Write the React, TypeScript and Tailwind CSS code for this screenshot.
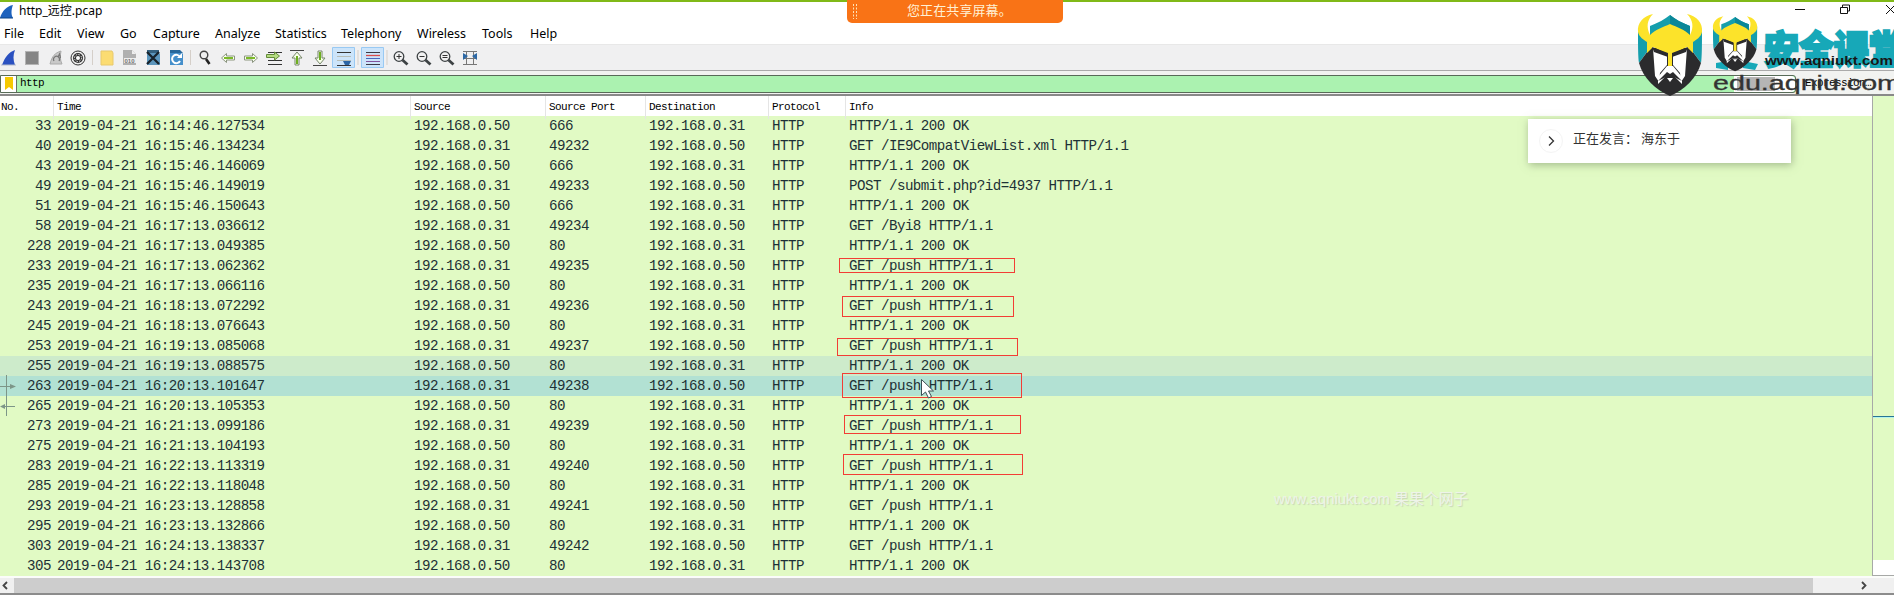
import React from "react";

const rows: [string, string, string, string, string][] = [
  ["33", "16:14:46.127534", "r", "666", "HTTP/1.1 200 OK"],
  ["40", "16:15:46.134234", "s", "49232", "GET /IE9CompatViewList.xml HTTP/1.1"],
  ["43", "16:15:46.146069", "r", "666", "HTTP/1.1 200 OK"],
  ["49", "16:15:46.149019", "s", "49233", "POST /submit.php?id=4937 HTTP/1.1"],
  ["51", "16:15:46.150643", "r", "666", "HTTP/1.1 200 OK"],
  ["58", "16:17:13.036612", "s", "49234", "GET /Byi8 HTTP/1.1"],
  ["228", "16:17:13.049385", "r", "80", "HTTP/1.1 200 OK"],
  ["233", "16:17:13.062362", "s", "49235", "GET /push HTTP/1.1"],
  ["235", "16:17:13.066116", "r", "80", "HTTP/1.1 200 OK"],
  ["243", "16:18:13.072292", "s", "49236", "GET /push HTTP/1.1"],
  ["245", "16:18:13.076643", "r", "80", "HTTP/1.1 200 OK"],
  ["253", "16:19:13.085068", "s", "49237", "GET /push HTTP/1.1"],
  ["255", "16:19:13.088575", "r", "80", "HTTP/1.1 200 OK"],
  ["263", "16:20:13.101647", "s", "49238", "GET /push HTTP/1.1"],
  ["265", "16:20:13.105353", "r", "80", "HTTP/1.1 200 OK"],
  ["273", "16:21:13.099186", "s", "49239", "GET /push HTTP/1.1"],
  ["275", "16:21:13.104193", "r", "80", "HTTP/1.1 200 OK"],
  ["283", "16:22:13.113319", "s", "49240", "GET /push HTTP/1.1"],
  ["285", "16:22:13.118048", "r", "80", "HTTP/1.1 200 OK"],
  ["293", "16:23:13.128858", "s", "49241", "GET /push HTTP/1.1"],
  ["295", "16:23:13.132866", "r", "80", "HTTP/1.1 200 OK"],
  ["303", "16:24:13.138337", "s", "49242", "GET /push HTTP/1.1"],
  ["305", "16:24:13.143708", "r", "80", "HTTP/1.1 200 OK"],
];

const rowColors: Record<string, string> = {
  "255": "bg-[#cdebcb]",
  "263": "bg-[#b2e1d3]",
};

const grid = "grid grid-cols-[54px_357px_135px_100px_123px_77px_1fr]";

const menus: [string, string][] = [
  ["File", "w-[35px]"],
  ["Edit", "w-[38px]"],
  ["View", "w-[43px]"],
  ["Go", "w-[33px]"],
  ["Capture", "w-[62px]"],
  ["Analyze", "w-[60px]"],
  ["Statistics", "w-[66px]"],
  ["Telephony", "w-[76px]"],
  ["Wireless", "w-[65px]"],
  ["Tools", "w-[48px]"],
  ["Help", "w-[40px]"],
];

function Toolbar() {
  return (
    <svg width="500" height="24" viewBox="0 46 500 24" fill="none" className="block shrink-0">
      <path d="M2 65C5 57 9 52 15 50C13 55 13 60 15 65Z" fill="#2a50c0" />
      <path d="M1 65H16" stroke="#b5bccb" />
      <rect x="25.500" y="51.500" width="13" height="13" fill="#858585" stroke="#b4b4b4" />
      <path d="M50 64C52 56 55 53 61 51C60 56 60 60 62 64Z" fill="#c9c9c9" stroke="#aaa" />
      <path d="M54 61a3 3 0 1 1 5 0M58 57l1.500-3 1 4" stroke="#777" strokeWidth="1.200" />
      <circle cx="78" cy="58" r="7" fill="#eee" stroke="#333" />
      <circle cx="78" cy="58" r="5" fill="#333" />
      <circle cx="78" cy="58" r="3.500" stroke="#eee" strokeDasharray="1.500 1.250" />
      <circle cx="78" cy="58" r="2" fill="#fff" />
      <path d="M92.500 50v15M190.500 50v15M358 50v15M387 50v15" stroke="#d5cfc9" />
      <path d="M101 51h11l1 2v12h-12z" fill="#fbdc72" stroke="#e8c96c" />
      <path d="M123 50h9l4 4v11h-13z" fill="#b0b0b0" />
      <path d="M132 50v4h4" fill="#eee" />
      <rect x="124" y="58" width="12" height="5" fill="#ededed" />
      <text x="124.500" y="63" fontSize="6" fontWeight="700" fontFamily="Liberation Sans" fill="#777">010</text>
      <path d="M147 50h9l4 4v11h-13z" fill="#5c96bd" />
      <path d="M147 50h12v3h-12z" fill="#35617f" />
      <path d="M147 52l12 12M159 52l-12 12" stroke="#17232c" strokeWidth="2.300" />
      <path d="M170 50h9l4 4v11h-13z" fill="#458fcb" />
      <path d="M170 50h10l3 3h-13z" fill="#27679b" />
      <path d="M180 57a4.200 4.200 0 1 0 0 4" stroke="#fff" strokeWidth="2" />
      <path d="M177 58h5v-5z" fill="#fff" />
      <circle cx="204" cy="55" r="3.800" fill="#eee" stroke="#444" strokeWidth="1.400" />
      <path d="M206 59l3.500 5" stroke="#222" strokeWidth="2.600" />
      <g fill="#f9fff0" stroke="#8b957f">
        <path d="M221.500 58l5-4.500v2.500h8v4h-8v2.500z" />
        <path d="M257.500 58l-5-4.500v2.500h-8v4h8v2.500z" />
      </g>
      <path d="M224 58h9M246 58h9" stroke="#7bb929" strokeWidth="2" />
      <path d="M268 52.500h14M268 60.500h14M268 64.500h14" stroke="#333" />
      <path d="M266.500 54.500h8V52l5 4-5 4v-2.500h-8z" fill="#b5dc80" stroke="#638a39" />
      <path d="M290 50.500h14M313 65.500h14" stroke="#444" />
      <path d="M297 52l-5 6h3v7h4v-7h3zM320 64l-5-6h3v-7h4v7h3z" fill="#f7ffe9" stroke="#77866b" />
      <path d="M297 56v8M320 52v8" stroke="#6eae20" strokeWidth="2" />
      <path d="M332.500 47.500h22v20h-22zM361.500 47.500h22v20h-22z" fill="#cce4fa" stroke="#98c9f3" />
      <path d="M337 52.500h14M337 65.500h14" stroke="#333" />
      <path d="M337 56.500h14M337 60.500h14" stroke="#b7bdb7" />
      <path d="M343 61h8l-2 4h-4z" fill="#2c65a5" />
      <path d="M366 52.500h14M366 64.500h14" stroke="#3b3b45" />
      <path d="M366 55.500h14" stroke="#d94c4c" strokeWidth="1.300" />
      <path d="M366 58.500h14" stroke="#4b67bc" />
      <path d="M366 61.500h14" stroke="#81529c" />
      {[399, 422, 445].map((x) => (
        <g key={x} stroke="#3d4244">
          <circle cx={x} cy="56.500" r="4.800" fill="#f2f2f2" strokeWidth="1.300" />
          <path d={`M${x + 3.5} 60l5 4.500`} strokeWidth="2.800" />
        </g>
      ))}
      <path d="M396.500 56.500h5M399 54v5M419.500 56.500h5M442.500 55.500h5M442.500 57.500h5" stroke="#333" />
      <path d="M463 51.500h14M463 64.500h14M466.500 52v12M473.500 52v12M463 58.500h14" stroke="#777" />
      <path d="M463 53l5 3-5 4zM477 53l-5 3 5 4z" fill="#2d68a5" />
    </svg>
  );
}

function Viking() {
  return (
    <>
      <path d="M12 11C20 8 27 4 32 0C37 4 44 8 52 11V24H12Z" fill="#159eac" />
      <path d="M32 0C37 4 44 8 52 11V24H32Z" fill="#0b8798" />
      <path d="M0 14L11 24V34L1 48C0 43 0 28 0 14ZM64 14L53 24V34L63 48C64 43 64 28 64 14Z" fill="#159eac" />
      <path d="M12 33H52L63 48C59 63 46 75 32 81C18 75 5 63 1 48Z" fill="#2b2b2d" />
      <path d="M15 -1C5 1 -1 8 0 17C1 22 6 25 9 27V38L15 32L32 40L49 32L55 38V27C58 25 63 22 64 17C65 8 59 1 49 -1C55 5 56 12 52 20C47 15 39 12 32 9C25 12 17 15 12 20C8 12 9 5 15 -1Z" fill="#fce32a" />
      <path d="M15 33L29 40V50L22 58L21 67L17 61ZM49 33L35 40V50L42 58L43 67L47 61Z" fill="#fff" />
      <path d="M14 32L30 38V42L16 37ZM50 32L34 38V42L48 37Z" fill="#2b2b2d" />
      <path d="M30 36H34V51H30Z" fill="#fce32a" />
      <path d="M29 51H35L44 62V69L37 62H27L20 69V62Z" fill="#fff" />
      <path d="M20 66L29 57L32 59L35 57L44 66L36 62H28Z" fill="#2b2b2d" />
      <path d="M29 63H35L32 67Z" fill="#fff" />
    </>
  );
}

function Watermark() {
  return (
    <svg width="260" height="90" viewBox="1634 10 260 90" className="pointer-events-none absolute left-[1634px] top-[10px]">
      <path d="M1716 63l12-2v9l-12-2zM1743 61l15 3-3 6-12-2z" fill="#17a8b8" />
      <text x="1764" y="63" fontSize="38" fontWeight="900" textLength="140" lengthAdjust="spacingAndGlyphs" fontFamily="Noto Sans CJK SC, sans-serif" fill="#17a8b8" stroke="#17a8b8" strokeWidth="2.500">安全课堂</text>
      <g transform="translate(1638 15)"><Viking /></g>
      <g transform="translate(1713 17) scale(.69 .67)"><Viking /></g>
      <text x="1765" y="65" fontSize="13" fontWeight="700" textLength="128" lengthAdjust="spacingAndGlyphs" fontFamily="Liberation Sans, sans-serif" fill="#171717">www.aqniukt.com</text>
      <text x="1713" y="90" fontSize="20" textLength="188" lengthAdjust="spacingAndGlyphs" fontFamily="Liberation Sans, sans-serif" fill="#333" stroke="#333" strokeWidth=".3">edu.aqniu.com</text>
    </svg>
  );
}

const annotations = [
  "left-[839px] top-[258px] w-[176px] h-[15px]",
  "left-[842px] top-[296px] w-[172px] h-[21px]",
  "left-[837px] top-[338px] w-[181px] h-[18px]",
  "left-[842px] top-[373px] w-[180px] h-[25px]",
  "left-[844px] top-[415px] w-[177px] h-[19px]",
  "left-[843px] top-[454px] w-[180px] h-[21px]",
];

export default function App() {
  return (
    <div className="relative flex h-[595px] w-[1894px] flex-col overflow-hidden bg-white font-['Open_Sans','Noto_Sans_CJK_SC',sans-serif] text-black">
      <div className="h-[2px] shrink-0 bg-[#80b918]" />
      <header className="flex h-[20px] shrink-0 items-center">
        <svg width="16" height="16" viewBox="0 0 16 16"><path d="M0 14C2 7 7 2 13 1C11 6 11 11 13 14Z" fill="#1e62bd" /><path d="M0 14H13" stroke="#0d4587" /></svg>
        <span className="ml-[3px] pb-[2px] font-['Noto_Sans','Noto_Sans_CJK_SC',sans-serif] text-[12px] leading-[18px]">http_远控.pcap</span>
        <svg className="ml-auto" width="99" height="20" viewBox="1795 2 99 20" fill="none" stroke="#111">
          <path d="M1795 9.500h10M1840.500 7.500h7v6h-7zM1842.500 7v-2h7v6h-2M1886 5l9 9M1895 5l-9 9" />
        </svg>
      </header>
      <nav className="flex h-[22px] shrink-0 items-center pl-[4px] pt-[2px] font-['Noto_Sans','Noto_Sans_CJK_SC',sans-serif] text-[12.5px]">
        {menus.map(([m, w]) => <span key={m} className={w}>{m}</span>)}
      </nav>
      <div className="flex h-[27px] shrink-0 items-center border-b border-t border-b-[#aaa] border-t-[#e8e8e8] bg-[#f0f0f1]"><Toolbar /></div>
      <div className="flex h-[25px] shrink-0 items-center border-b-2 border-[#898989] bg-[#f2f3f1] pt-[2px]">
        <div className="flex h-[18px] w-[1796px] items-center rounded-r-[3px] border border-[#586b58] bg-[#abf2b0]">
          <div className="flex h-full w-[16px] items-center justify-center border-r border-[#657165] bg-white">
            <svg width="9" height="14"><path d="M1 0h8v13l-4-3-4 3z" fill="#f5c900" /></svg>
          </div>
          <span className="ml-[3px] font-['Liberation_Mono',monospace] text-[11px] tracking-[-0.6px]">http</span>
          <div className="ml-auto h-full w-[61px] rounded-r bg-white"><div className="ml-[3px] mt-[1px] h-[14px] w-[38px] bg-[#b5b5b5]" /></div>
        </div>
        <span className="ml-[9px] font-['Liberation_Mono',monospace] text-[11px] tracking-[-0.6px]">Expression…</span>
      </div>
      <main className="flex h-[480px] shrink-0">
        <section className="w-[1872px] shrink-0 bg-[#e1fac4]">
          <div className={`${grid} h-[20px] bg-white font-['Liberation_Mono',monospace] text-[11px] leading-[23px] tracking-[-0.6px]`}>
            <span className="border-r border-[#e5e5e5] pl-px">No.</span>
            {["Time", "Source", "Source Port", "Destination", "Protocol"].map((h) => <span key={h} className="border-r border-[#e5e5e5] pl-[3px]">{h}</span>)}
            <span className="pl-[3px]">Info</span>
          </div>
          {rows.map(([no, time, direction, port, info]) => (
            <div key={no} className={`${grid} h-[20px] whitespace-pre font-['Liberation_Mono',monospace] text-[14.2px] leading-[21px] tracking-[-0.53px] text-[#1d3136] ${rowColors[no] ?? ""}`}>
              <span className="pr-[3px] text-right">{no}</span>
              <span className="pl-[3px]">2019-04-21 {time}</span>
              <span className="pl-[3px]">{direction === "r" ? "192.168.0.50" : "192.168.0.31"}</span>
              <span className="pl-[3px]">{port}</span>
              <span className="pl-[3px]">{direction === "r" ? "192.168.0.31" : "192.168.0.50"}</span>
              <span className="pl-[3px]">HTTP</span>
              <span className="pl-[3px]">{info}</span>
            </div>
          ))}
        </section>
        <aside className="flex flex-1 flex-col border-b border-l border-[#a7a9a7] bg-white">
          <div className="h-[320px] bg-[#e1fac4]" />
          <div className="h-px bg-[#287594]" />
          <div className="h-px bg-[#b3f3ed]" />
          <div className="h-[142px] bg-[#e1fac4]" />
        </aside>
      </main>
      <footer className="flex h-[19px] shrink-0 items-center border-b-2 border-t-2 border-b-[#8c8c8c] border-t-[#fbfcfa] bg-[#f0f0f0]">
        <svg width="14" height="15" fill="none" stroke="#444" strokeWidth="1.800"><path d="M7 4L3.500 7.500L7 11" /></svg>
        <div className="h-full w-[1799px] bg-[#cdcdcd]" />
        <svg className="ml-[47px]" width="14" height="15" fill="none" stroke="#444" strokeWidth="1.800"><path d="M2 4l3.500 3.500L2 11" /></svg>
      </footer>

      <div className="absolute left-[847px] top-0 flex h-[23px] w-[216px] items-center rounded-b-[5px] bg-[#f97316]">
        <svg className="ml-[6px]" width="5" height="15" stroke="#ffe2b6" strokeDasharray="2 1.500"><path d="M.5 0v15M3.500 0v15" /></svg>
        <span className="ml-[49px] pb-[4px] font-['Noto_Sans_CJK_SC',sans-serif] text-[13px] leading-none tracking-[.1px] text-[#fff0d4]">您正在共享屏幕。</span>
      </div>
      {annotations.map((c) => <div key={c} className={`absolute border border-[#f23d35] ${c}`} />)}
      <svg className="absolute left-0 top-[375px]" width="16" height="42" fill="none" stroke="#7d9688"><path d="M6.500 0v41M0 11.500h11M4 31.500h11" /><path d="M10 9l6 2.500-6 2.500zM5 29l-5 2.500 5 2.500z" fill="#7d9688" stroke="none" /></svg>
      <svg className="absolute left-[920px] top-[378px]" width="18" height="22"><path d="M1.500 1.500v16l4-3.500 3 6 3-1.500-3-5.500h5z" fill="#fff" stroke="#3c4e52" /></svg>
      <div className="absolute left-[1528px] top-[119px] flex h-[44px] w-[263px] items-center bg-white shadow-[1px_2px_8px_#6c815c88]">
        <div className="ml-[11px] flex h-[24px] w-[24px] items-center justify-center rounded-full border border-[#f4f4f4]">
          <svg width="12" height="14" fill="none" stroke="#333" strokeWidth="1.300"><path d="M4 2.500l4.500 4.500L4 11.500" /></svg>
        </div>
        <span className="ml-[10px] pb-[8px] font-['Noto_Sans_CJK_SC',sans-serif] text-[13px] leading-none text-[#333]">正在发言： 海东于</span>
      </div>
      <div className="absolute left-[1274px] top-[489px] whitespace-nowrap font-['Liberation_Sans','Noto_Sans_CJK_SC',sans-serif] text-[14.9px] leading-[20px] text-[#eef3e9] [text-shadow:1px_1px_1px_#c8d6b8]">www.aqniukt.com 果果个网子</div>
      <Watermark />
    </div>
  );
}
